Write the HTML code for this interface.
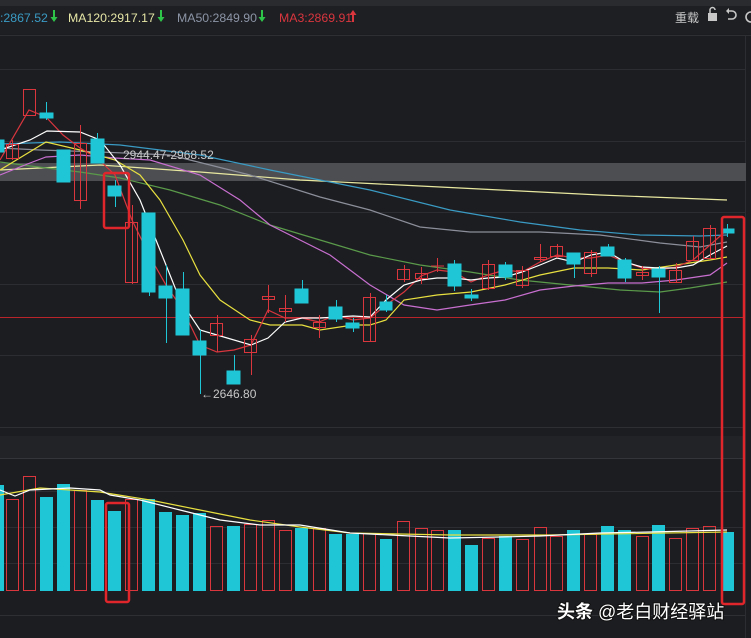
<!DOCTYPE html>
<html><head><meta charset="utf-8"><style>
html,body{margin:0;padding:0;background:#1c1d21;width:751px;height:638px;overflow:hidden}
svg{display:block}
text{font-family:"Liberation Sans","Noto Sans CJK SC",sans-serif}
</style></head><body>
<svg width="751" height="638" viewBox="0 0 751 638" xmlns="http://www.w3.org/2000/svg">
<defs>
<path id="dn" d="M-1 -6 h2 v7 h2.5 l-3.5 5 l-3.5 -5 h2.5 z"/>
</defs>
<rect width="751" height="638" fill="#1c1d21"/>
<rect x="0" y="0" width="751" height="6" fill="#2a2b2f"/>
<rect x="0" y="6" width="751" height="28" fill="#1e1f23"/>
<line x1="0" y1="35.5" x2="751" y2="35.5" stroke="#2e2f33"/>
<text x="0" y="22" font-size="12.3" fill="#3a9bc4">:2867.52</text>
<use href="#dn" x="54" y="16" fill="#2ec44a"/>
<text x="68" y="22" font-size="12.3" fill="#e6e6a6">MA120:2917.17</text>
<use href="#dn" x="161" y="16" fill="#2ec44a"/>
<text x="177" y="22" font-size="12.3" fill="#8c95a6">MA50:2849.90</text>
<use href="#dn" x="262" y="16" fill="#2ec44a"/>
<text x="279" y="22" font-size="12.3" fill="#d9363e">MA3:2869.91</text>
<use href="#dn" x="353" y="16" fill="#d9363e" transform="rotate(180 353 16)"/>
<text x="675" y="22" font-size="12" fill="#c8c8c8">重载</text>
<rect x="708" y="13" width="9" height="8" fill="#c8c8c8"/>
<path d="M710 13 V10 a2.5 2.5 0 0 1 5 0" fill="none" stroke="#c8c8c8" stroke-width="1.5"/>
<path d="M728 11 h4 a4 4 0 0 1 0 8 h-4" fill="none" stroke="#c8c8c8" stroke-width="1.6"/>
<path d="M726 11 l3 -3 v6 z" fill="#c8c8c8"/>
<path d="M751 12 a5 5 0 0 0 0 10" fill="none" stroke="#c8c8c8" stroke-width="1.6"/>
<g stroke="#2c2d32" stroke-width="1">
<line x1="0" y1="69.5" x2="745" y2="69.5"/>
<line x1="0" y1="141.5" x2="745" y2="141.5"/>
<line x1="0" y1="212.5" x2="745" y2="212.5"/>
<line x1="0" y1="284.5" x2="745" y2="284.5"/>
<line x1="0" y1="355.5" x2="745" y2="355.5"/>
<line x1="745.5" y1="36" x2="745.5" y2="638"/>
</g>
<rect x="0" y="163" width="746" height="18" fill="#4d4e52"/>
<line x1="0" y1="317.5" x2="745" y2="317.5" stroke="#b8242a" stroke-width="1"/>
<line x1="0" y1="427.5" x2="745" y2="427.5" stroke="#2e2f33"/>
<rect x="0" y="436" width="745" height="22" fill="#222327"/>
<line x1="0" y1="458.5" x2="745" y2="458.5" stroke="#34353a"/>
<g stroke="#2c2d32"><line x1="0" y1="491.5" x2="745" y2="491.5"/><line x1="0" y1="527.5" x2="745" y2="527.5"/><line x1="0" y1="563.5" x2="745" y2="563.5"/></g>
<line x1="0" y1="615.5" x2="745" y2="615.5" stroke="#2e2f33"/>
<g fill="none" stroke-width="1.2">
<polyline stroke="#e8e8a0" points="0,170 100,165 200,172 300,180 400,185 500,190 600,195 727,200"/>
<polyline stroke="#3a9bc4" points="0,144 60,142 120,145 200,155 270,170 370,190 450,210 520,222 580,230 640,235 700,236 727,235"/>
<polyline stroke="#8c8f9a" points="0,148 40,150 100,152 170,155 250,175 320,197 370,210 420,227 470,232 540,232 600,235 660,243 700,247 727,242"/>
<polyline stroke="#5a9a4a" points="0,162 30,166 80,172 120,178 170,190 220,205 270,225 320,240 370,255 420,265 470,272 520,280 570,285 620,290 660,292 690,288 727,282"/>
<polyline stroke="#c86fd0" points="0,175 30,163 46,157 80,155 115,158 150,160 200,175 240,200 270,225 300,240 330,255 370,285 404,305 437,310 470,305 505,300 540,290 574,286 608,283 642,283 676,280 710,275 727,263"/>
<polyline stroke="#e8e040" points="0,170 46,142 80,150 115,160 140,175 160,200 183,240 200,275 220,300 250,320 270,325 302,325 320,330 353,325 370,325 386,320 404,300 437,295 471,292 505,285 540,275 574,268 608,268 642,270 676,265 710,260 727,257"/>
<polyline stroke="#d9363e" points="0,160 29,110 46,117 63,135 80,148 97,158 115,175 132,220 149,255 166,285 183,310 200,345 217,352 234,350 251,345 268,310 285,318 302,318 319,322 336,315 353,320 370,318 386,305 404,292 421,276 437,270 454,272 471,282 488,275 505,270 522,272 540,262 557,255 574,258 591,258 608,255 625,262 642,268 659,270 676,267 693,260 710,245 727,230"/>
<polyline stroke="#ffffff" points="0,150 30,140 47,131 80,132 100,140 120,165 140,200 160,250 180,300 200,330 217,335 251,345 268,338 285,322 302,318 320,318 353,316 370,317 386,300 404,285 421,280 437,278 454,278 471,280 488,278 505,277 522,272 540,265 557,258 574,262 591,255 608,252 625,262 642,267 659,268 676,268 693,265 710,255 727,246"/>
</g>
<g stroke-width="1">
<g fill="#1fc6d6" stroke="#1fc6d6">
<rect x="0" y="140" width="4" height="12"/>
<line x1="46.5" y1="102" x2="46.5" y2="120"/><rect x="40" y="113" width="13" height="5"/>
<rect x="57" y="150" width="13" height="32"/>
<line x1="97.5" y1="133" x2="97.5" y2="163"/><rect x="91" y="139" width="13" height="24"/>
<line x1="115.5" y1="180" x2="115.5" y2="207"/><rect x="108" y="186" width="13" height="10"/>
<line x1="149.5" y1="213" x2="149.5" y2="296"/><rect x="142" y="213" width="13" height="79"/>
<line x1="166.5" y1="265" x2="166.5" y2="343"/><rect x="159" y="286" width="13" height="12"/>
<line x1="183.5" y1="272" x2="183.5" y2="335"/><rect x="176" y="289" width="13" height="46"/>
<line x1="200.5" y1="330" x2="200.5" y2="392"/><rect x="193" y="341" width="13" height="14"/>
<line x1="234.5" y1="355" x2="234.5" y2="384"/><rect x="227" y="371" width="13" height="13"/>
<line x1="302.5" y1="280" x2="302.5" y2="303"/><rect x="295" y="289" width="13" height="14"/>
<line x1="336.5" y1="300" x2="336.5" y2="322"/><rect x="329" y="307" width="13" height="12"/>
<line x1="353.5" y1="318" x2="353.5" y2="332"/><rect x="346" y="323" width="13" height="5"/>
<line x1="386.5" y1="295" x2="386.5" y2="312"/><rect x="380" y="302" width="12" height="8"/>
<line x1="454.5" y1="260" x2="454.5" y2="291"/><rect x="448" y="264" width="13" height="22"/>
<line x1="471.5" y1="289" x2="471.5" y2="301"/><rect x="465" y="295" width="13" height="3"/>
<line x1="505.5" y1="262" x2="505.5" y2="280"/><rect x="499" y="265" width="13" height="12"/>
<line x1="574.5" y1="253" x2="574.5" y2="278"/><rect x="567" y="253" width="13" height="11"/>
<line x1="608.5" y1="244" x2="608.5" y2="256"/><rect x="601" y="247" width="13" height="9"/>
<line x1="625.5" y1="258" x2="625.5" y2="282"/><rect x="618" y="260" width="13" height="18"/>
<line x1="659.5" y1="266" x2="659.5" y2="313"/><rect x="652" y="269" width="13" height="8"/>
<line x1="727.5" y1="224" x2="727.5" y2="237"/><rect x="722" y="229" width="12" height="4"/>
</g>
<g fill="none" stroke="#d9363e">
<line x1="12.5" y1="140" x2="12.5" y2="160"/><rect x="6.5" y="144.5" width="12" height="14"/>
<rect x="23.5" y="89.5" width="12" height="26"/>
<line x1="80.5" y1="125" x2="80.5" y2="209"/><rect x="74.5" y="143.5" width="12" height="57"/>
<line x1="132.5" y1="205" x2="132.5" y2="284"/><rect x="125.5" y="222.5" width="12" height="60"/>
<line x1="217.5" y1="315" x2="217.5" y2="352"/><rect x="210.5" y="323.5" width="12" height="12"/>
<line x1="251.5" y1="335" x2="251.5" y2="375"/><rect x="244.5" y="339.5" width="12" height="13"/>
<line x1="268.5" y1="285" x2="268.5" y2="313"/><rect x="262.5" y="296.5" width="12" height="3"/>
<line x1="285.5" y1="295" x2="285.5" y2="322"/><rect x="279.5" y="308.5" width="12" height="3"/>
<line x1="319.5" y1="315" x2="319.5" y2="338"/><rect x="313.5" y="322.5" width="12" height="5"/>
<line x1="370.5" y1="293" x2="370.5" y2="342"/><rect x="363.5" y="297.5" width="12" height="44"/>
<line x1="404.5" y1="265" x2="404.5" y2="282"/><rect x="397.5" y="269.5" width="12" height="10"/>
<line x1="421.5" y1="267" x2="421.5" y2="284"/><rect x="415.5" y="273.5" width="12" height="5"/>
<line x1="437.5" y1="258" x2="437.5" y2="272"/><line x1="431" y1="266" x2="444" y2="266"/>
<line x1="488.5" y1="260" x2="488.5" y2="290"/><rect x="482.5" y="264.5" width="12" height="24"/>
<line x1="522.5" y1="266" x2="522.5" y2="288"/><rect x="516.5" y="270.5" width="12" height="15"/>
<line x1="540.5" y1="244" x2="540.5" y2="262"/><rect x="534.5" y="257.5" width="12" height="2"/>
<line x1="557.5" y1="244" x2="557.5" y2="258"/><rect x="550.5" y="246.5" width="12" height="10"/>
<line x1="591.5" y1="250" x2="591.5" y2="277"/><rect x="584.5" y="252.5" width="12" height="21"/>
<line x1="642.5" y1="266" x2="642.5" y2="280"/><rect x="636.5" y="272.5" width="12" height="3"/>
<line x1="676.5" y1="263" x2="676.5" y2="283"/><rect x="669.5" y="270.5" width="12" height="12"/>
<line x1="693.5" y1="236" x2="693.5" y2="261"/><rect x="686.5" y="241.5" width="12" height="19"/>
<line x1="710.5" y1="225" x2="710.5" y2="259"/><rect x="703.5" y="228.5" width="12" height="30"/>
</g>
</g>
<text x="123" y="159" font-size="12" fill="#c8c8c8">2944.47-2968.52</text>
<line x1="200.5" y1="384" x2="200.5" y2="394" stroke="#1fc6d6"/>
<text x="201" y="398" font-size="12" fill="#c8c8c8">←2646.80</text>
<g fill="#1fc6d6">
<rect x="0" y="485" width="4" height="106"/>
<rect x="40" y="497" width="13" height="94"/>
<rect x="57" y="484" width="13" height="107"/>
<rect x="91" y="500" width="13" height="91"/>
<rect x="108" y="511" width="13" height="80"/>
<rect x="142" y="499" width="13" height="92"/>
<rect x="159" y="512" width="13" height="79"/>
<rect x="176" y="515" width="13" height="76"/>
<rect x="193" y="513" width="13" height="78"/>
<rect x="227" y="526" width="13" height="65"/>
<rect x="295" y="528" width="13" height="63"/>
<rect x="329" y="534" width="13" height="57"/>
<rect x="346" y="534" width="13" height="57"/>
<rect x="380" y="539" width="12" height="52"/>
<rect x="448" y="530" width="13" height="61"/>
<rect x="465" y="545" width="13" height="46"/>
<rect x="499" y="536" width="13" height="55"/>
<rect x="567" y="530" width="13" height="61"/>
<rect x="601" y="526" width="13" height="65"/>
<rect x="618" y="530" width="13" height="61"/>
<rect x="652" y="525" width="13" height="66"/>
<rect x="722" y="532" width="12" height="59"/>
</g>
<g fill="none" stroke="#d9363e">
<rect x="6.5" y="499.5" width="12" height="91"/>
<rect x="23.5" y="476.5" width="12" height="114"/>
<rect x="74.5" y="490.5" width="12" height="100"/>
<rect x="125.5" y="499.5" width="12" height="91"/>
<rect x="210.5" y="526.5" width="12" height="64"/>
<rect x="244.5" y="524.5" width="12" height="66"/>
<rect x="262.5" y="520.5" width="12" height="70"/>
<rect x="279.5" y="530.5" width="12" height="60"/>
<rect x="313.5" y="528.5" width="12" height="62"/>
<rect x="363.5" y="533.5" width="12" height="57"/>
<rect x="397.5" y="521.5" width="12" height="69"/>
<rect x="415.5" y="528.5" width="12" height="62"/>
<rect x="431.5" y="530.5" width="12" height="60"/>
<rect x="482.5" y="538.5" width="12" height="52"/>
<rect x="516.5" y="539.5" width="12" height="51"/>
<rect x="534.5" y="527.5" width="12" height="63"/>
<rect x="550.5" y="536.5" width="12" height="54"/>
<rect x="584.5" y="534.5" width="12" height="56"/>
<rect x="636.5" y="536.5" width="12" height="54"/>
<rect x="669.5" y="538.5" width="12" height="52"/>
<rect x="686.5" y="528.5" width="12" height="62"/>
<rect x="703.5" y="526.5" width="12" height="64"/>
</g>
<g fill="none" stroke-width="1.2">
<polyline stroke="#e8e040" points="0,495 40,488 100,492 150,500 200,510 250,520 300,527 350,533 450,535 550,535 727,532"/>
<polyline stroke="#ffffff" points="0,490 15,496 30,490 70,488 100,490 110,495 140,500 180,510 220,520 260,525 300,525 350,533 390,535 450,538 500,537 540,536 600,533 650,532 727,530"/>
</g>
<g fill="none" stroke="#e0252b" stroke-width="2.5">
<rect x="104" y="173" width="25" height="55" rx="2"/>
<rect x="106" y="503" width="23" height="99" rx="2"/>
<rect x="722" y="217" width="22" height="387" rx="2"/>
</g>
<text x="557" y="618" font-size="18" font-weight="bold" fill="#ffffff" style="paint-order:stroke" stroke="#111" stroke-width="2">头条</text>
<text x="598" y="618" font-size="18" fill="#ffffff" style="paint-order:stroke" stroke="#111" stroke-width="2">@老白财经驿站</text>
</svg>
</body></html>
